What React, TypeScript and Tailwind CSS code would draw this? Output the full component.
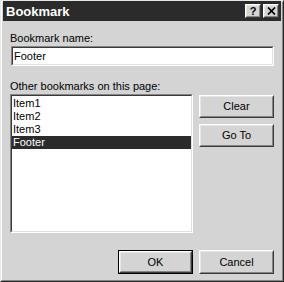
const font = { fontFamily: '"Liberation Sans", Arial, sans-serif' };

function Raised({ children, className = '' }: { children?: React.ReactNode; className?: string }) {
  return (
    <div className={`border border-t-white border-l-white border-r-[#3a3a3a] border-b-[#3a3a3a] ${className}`}>
      <div className="w-full h-full border border-t-[#e6e6e6] border-l-[#e6e6e6] border-r-[#858585] border-b-[#858585] flex items-center justify-center">
        {children}
      </div>
    </div>
  );
}

function Sunken({ children, className = '' }: { children?: React.ReactNode; className?: string }) {
  return (
    <div className={`border border-t-[#858585] border-l-[#858585] border-r-white border-b-white ${className}`}>
      <div className="w-full h-full border border-t-[#3a3a3a] border-l-[#3a3a3a] border-r-[#e0e0e0] border-b-[#e0e0e0] bg-white">
        {children}
      </div>
    </div>
  );
}

function Btn({ label, def = false }: { label: string; def?: boolean }) {
  if (def) {
    return (
      <div className="w-[75px] h-[24px] border border-black">
        <Raised className="w-full h-full">
          <span className="text-[11px] text-black">{label}</span>
        </Raised>
      </div>
    );
  }
  return (
    <Raised className="w-[75px] h-[24px]">
      <span className="text-[11px] text-black">{label}</span>
    </Raised>
  );
}

export default function App() {
  const items = ['Item1', 'Item2', 'Item3', 'Footer'];
  return (
    <div
      style={font}
      className="w-[284px] h-[282px] bg-[#d4d4d4] border border-t-[#e8e8e8] border-l-[#e8e8e8] border-r-[#2a2a2a] border-b-[#2a2a2a] flex flex-col overflow-hidden"
    >
      <div className="border border-t-white border-l-white border-r-[#858585] border-b-[#858585] flex-1 flex flex-col">
        {/* title bar */}
        <div className="h-[20px] mx-[1px] -mt-[1px] bg-[#2b2b2b] flex items-center justify-between pl-[3px] pr-[2px]">
          <span className="text-white font-bold text-[13px] leading-none">Bookmark</span>
          <div className="flex gap-[2px]">
            <Raised className="w-[16px] h-[14px] bg-[#d4d4d4]">
              <span className="text-[11px] font-bold text-black leading-none">?</span>
            </Raised>
            <Raised className="w-[16px] h-[14px] bg-[#d4d4d4]">
              <svg width="9" height="8" viewBox="0 0 9 8">
                <path d="M1 0.5 L8 7.5 M8 0.5 L1 7.5" stroke="#000" strokeWidth="1.7" />
              </svg>
            </Raised>
          </div>
        </div>

        <div className="flex flex-col pl-[8px] pr-[8px] text-[11px] text-black">
          <div className="mt-[9px] h-[16px] leading-[16px]">Bookmark name:</div>
          <Sunken className="w-[263px] h-[20px] ml-[1px]">
            <div className="pl-[1px] leading-[16px]">Footer</div>
          </Sunken>

          <div className="mt-[14px] h-[13px] leading-[13px]">Other bookmarks on this page:</div>
          <div className="flex mt-[1px]">
            <Sunken className="w-[184px] h-[139px]">
              <div className="flex flex-col pt-[1px]">
                {items.map((it) => (
                  <div
                    key={it}
                    className={`h-[13px] leading-[13px] pl-[1px] ${it === 'Footer' ? 'bg-[#2b2b2b] text-white' : ''}`}
                  >
                    {it}
                  </div>
                ))}
              </div>
            </Sunken>
            <div className="ml-[6px] mt-[1px] flex flex-col gap-[6px]">
              <Raised className="w-[75px] h-[23px]">
                <span>Clear</span>
              </Raised>
              <Raised className="w-[75px] h-[23px]">
                <span>Go To</span>
              </Raised>
            </div>
          </div>

          <div className="flex justify-end gap-[6px] mt-[17px]">
            <Btn label="OK" def />
            <Btn label="Cancel" />
          </div>
        </div>
      </div>
    </div>
  );
}
